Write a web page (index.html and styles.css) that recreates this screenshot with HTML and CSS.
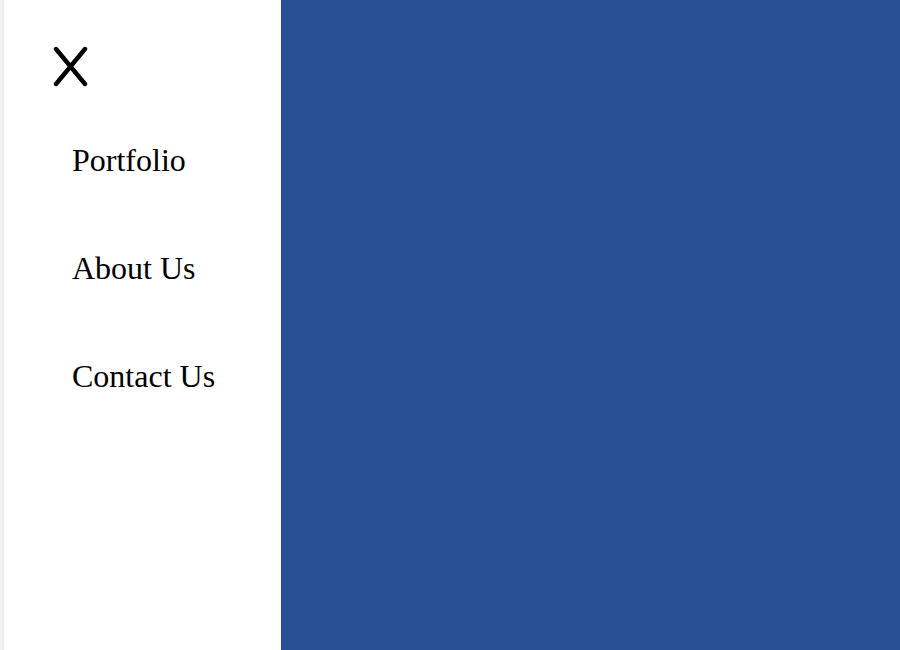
FILE: index.html
```html
<!DOCTYPE html>
<html>
<head>
<meta charset="utf-8">
<link rel="stylesheet" href="styles.css">
</head>
<body>
<div class="page">
  <aside class="drawer">
    <button class="close" aria-label="Close">
      <svg width="40" height="44" viewBox="0 0 40 44">
        <path d="M6 6 L35 41 M35 6 L6 41" stroke="#000" stroke-width="4.4" stroke-linecap="round" fill="none"/>
      </svg>
    </button>
    <nav class="menu">
      <a class="item" href="#">Portfolio</a>
      <a class="item" href="#">About Us</a>
      <a class="item" href="#">Contact Us</a>
    </nav>
  </aside>
  <main class="content"></main>
</div>
</body>
</html>
```
FILE: styles.css
```css
html, body {
  margin: 0;
  padding: 0;
  height: 100%;
}
body {
  background: #f1f1f1;
  font-family: "Liberation Serif", "Times New Roman", serif;
  overflow: hidden;
}
.page {
  display: flex;
  height: 650px;
  padding-left: 4px;
  background: linear-gradient(to right, #f4f4f4 0, #f4f4f4 2px, #e6e6e6 3px, #f0f0f0 4px);
}
.drawer {
  width: 277px;
  background: #ffffff;
  display: flex;
  flex-direction: column;
}
.close {
  margin: 43px 0 0 46px;
  padding: 0;
  width: 40px;
  height: 44px;
  border: 0;
  background: transparent;
  display: block;
}
.close svg {
  display: block;
}
.menu {
  display: flex;
  flex-direction: column;
  gap: 71px;
  margin-top: 55px;
  padding-left: 68px;
}
.item {
  font-size: 32px;
  line-height: 37px;
  color: #000;
  text-decoration: none;
}
.content {
  flex: 1;
  background: #294f94;
  border-left: 1px solid #234785;
}
```
